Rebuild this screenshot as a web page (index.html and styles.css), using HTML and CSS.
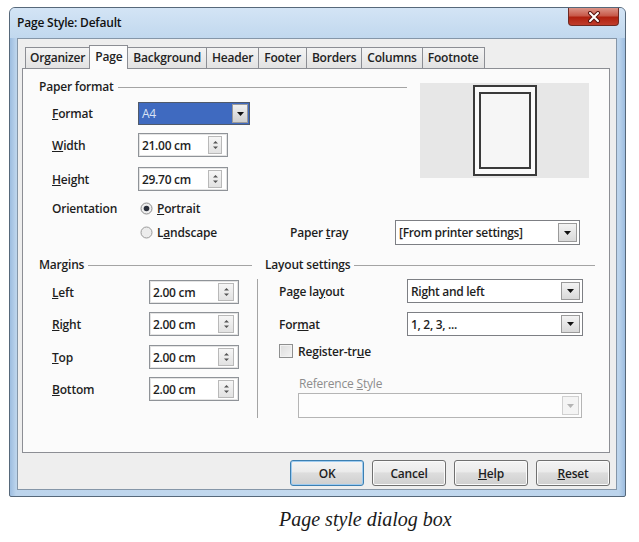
FILE: index.html
```html
<!DOCTYPE html>
<html lang="en">
<head>
<meta charset="utf-8">
<title>Page Style: Default</title>
<link rel="stylesheet" href="styles.css">
</head>
<body>
<div class="window">
  <div class="titlebar">
    <span class="title">Page Style: Default</span>
    <button class="close" type="button" aria-label="Close">
      <svg width="14" height="12" viewBox="0 0 14 12"><path d="M3 2l8 8M11 2l-8 8" stroke="#5a1410" stroke-width="4" stroke-linecap="round"/><path d="M3 2l8 8M11 2l-8 8" stroke="#fff" stroke-width="2" stroke-linecap="round"/></svg>
    </button>
  </div>
  <div class="client">
    <div class="tabs">
      <span class="tab">Organizer</span>
      <span class="tab active">Page</span>
      <span class="tab">Background</span>
      <span class="tab">Header</span>
      <span class="tab">Footer</span>
      <span class="tab">Borders</span>
      <span class="tab">Columns</span>
      <span class="tab">Footnote</span>
    </div>
    <div class="panel">
      <div class="paper">
        <div class="paper-fields">
          <div class="group-head">Paper format</div>
          <div class="row r-format">
            <span class="lbl lbl-paper"><u>F</u>ormat</span>
            <div class="combo combo-a4"><span class="combo-text">A4</span><span class="drop"><svg width="7" height="4" viewBox="0 0 7 4"><path d="M0 0h7L3.5 4z" fill="#111"/></svg></span></div>
          </div>
          <div class="row r-width">
            <span class="lbl lbl-paper"><u>W</u>idth</span>
            <div class="spin"><span class="spin-text">21.00 cm</span><span class="spin-btn"><svg width="7" height="12" viewBox="0 0 7 12"><path d="M1 4.5L3.5 2 6 4.5zM1 7.5L3.5 10 6 7.5z" fill="#555"/></svg></span></div>
          </div>
          <div class="row r-height">
            <span class="lbl lbl-paper"><u>H</u>eight</span>
            <div class="spin"><span class="spin-text">29.70 cm</span><span class="spin-btn"><svg width="7" height="12" viewBox="0 0 7 12"><path d="M1 4.5L3.5 2 6 4.5zM1 7.5L3.5 10 6 7.5z" fill="#555"/></svg></span></div>
          </div>
          <div class="row r-orient">
            <span class="lbl lbl-paper">Orientation</span>
            <span class="radio-opt">
              <svg class="radio" width="13" height="13" viewBox="0 0 13 13"><circle cx="6.5" cy="6.5" r="5.5" fill="#eee" stroke="#8a8a8a"/><circle cx="6.5" cy="6.5" r="2.8" fill="#2a2f3a"/></svg>
              <span><u>P</u>ortrait</span>
            </span>
          </div>
        </div>
        <div class="preview">
          <div class="sheet"><div class="sheet-inner"></div></div>
        </div>
      </div>
      <div class="row r-landscape">
        <span class="lbl lbl-paper"></span>
        <span class="radio-opt radio-land">
          <svg class="radio" width="13" height="13" viewBox="0 0 13 13"><circle cx="6.5" cy="6.5" r="5.5" fill="#ececec" stroke="#9a9a9a"/></svg>
          <span>L<u>a</u>ndscape</span>
        </span>
        <span class="lbl lbl-tray">Paper <u>t</u>ray</span>
        <div class="combo combo-tray"><span class="combo-text">[From printer settings]</span><span class="drop"><svg width="7" height="4" viewBox="0 0 7 4"><path d="M0 0h7L3.5 4z" fill="#111"/></svg></span></div>
      </div>
      <div class="lower">
        <div class="margins">
          <div class="group-head">Margins</div>
          <div class="row m-row m1">
            <span class="lbl lbl-margin"><u>L</u>eft</span>
            <div class="spin"><span class="spin-text">2.00 cm</span><span class="spin-btn"><svg width="7" height="12" viewBox="0 0 7 12"><path d="M1 4.5L3.5 2 6 4.5zM1 7.5L3.5 10 6 7.5z" fill="#555"/></svg></span></div>
          </div>
          <div class="row m-row m2">
            <span class="lbl lbl-margin"><u>R</u>ight</span>
            <div class="spin"><span class="spin-text">2.00 cm</span><span class="spin-btn"><svg width="7" height="12" viewBox="0 0 7 12"><path d="M1 4.5L3.5 2 6 4.5zM1 7.5L3.5 10 6 7.5z" fill="#555"/></svg></span></div>
          </div>
          <div class="row m-row m3">
            <span class="lbl lbl-margin"><u>T</u>op</span>
            <div class="spin"><span class="spin-text">2.00 cm</span><span class="spin-btn"><svg width="7" height="12" viewBox="0 0 7 12"><path d="M1 4.5L3.5 2 6 4.5zM1 7.5L3.5 10 6 7.5z" fill="#555"/></svg></span></div>
          </div>
          <div class="row m-row m4">
            <span class="lbl lbl-margin"><u>B</u>ottom</span>
            <div class="spin"><span class="spin-text">2.00 cm</span><span class="spin-btn"><svg width="7" height="12" viewBox="0 0 7 12"><path d="M1 4.5L3.5 2 6 4.5zM1 7.5L3.5 10 6 7.5z" fill="#555"/></svg></span></div>
          </div>
        </div>
        <div class="layout">
          <div class="group-head">Layout settings</div>
          <div class="layout-body">
            <div class="row l-row l1">
              <span class="lbl lbl-layout">Page la<u>y</u>out</span>
              <div class="combo combo-layout"><span class="combo-text">Right and left</span><span class="drop"><svg width="7" height="4" viewBox="0 0 7 4"><path d="M0 0h7L3.5 4z" fill="#111"/></svg></span></div>
            </div>
            <div class="row l-row l2">
              <span class="lbl lbl-layout">For<u>m</u>at</span>
              <div class="combo combo-layout"><span class="combo-text">1, 2, 3, ...</span><span class="drop"><svg width="7" height="4" viewBox="0 0 7 4"><path d="M0 0h7L3.5 4z" fill="#111"/></svg></span></div>
            </div>
            <div class="row check-row">
              <span class="check"></span>
              <span>Register-tr<u>u</u>e</span>
            </div>
            <div class="row ref-label"><span>Reference <u>S</u>tyle</span></div>
            <div class="combo combo-disabled"><span class="combo-text"></span><span class="drop"><svg width="7" height="4" viewBox="0 0 7 4"><path d="M0 0h7L3.5 4z" fill="#b4b4b4"/></svg></span></div>
          </div>
        </div>
      </div>
    </div>
    <div class="buttons">
      <button class="btn btn-default" type="button">OK</button>
      <button class="btn" type="button">Cancel</button>
      <button class="btn" type="button"><u>H</u>elp</button>
      <button class="btn" type="button"><u>R</u>eset</button>
    </div>
  </div>
</div>
<p class="caption">Page style dialog box</p>
</body>
</html>
```

FILE: styles.css
```css
* { box-sizing: border-box; }

body {
  margin: 0;
  padding: 7px 0 0 9px;
  background: #fff;
  font-family: "Open Sans", "Liberation Sans", sans-serif;
  font-size: 12px;
  color: #1e1e1e;
}

u { text-decoration: underline; text-underline-offset: 1px; }

/* window frame */
.window {
  width: 617px;
  height: 490px;
  border: 1px solid #56687a;
  border-radius: 6px 6px 2px 2px;
  background: linear-gradient(90deg, #9dbde0, #bcd4ec 6px, #c4daef 50%, #bcd4ec calc(100% - 6px), #9dbde0);
  display: flex;
  flex-direction: column;
}

.titlebar {
  height: 30px;
  flex: none;
  display: flex;
  align-items: flex-start;
  padding-left: 7px;
  background: linear-gradient(#d3e4f5, #c1d8ee);
  border-radius: 5px 5px 0 0;
}

.title {
  line-height: 30px;
  color: #111;
  font-weight: 600;
  letter-spacing: -0.2px;
}

.close {
  margin: 0 6px 0 auto;
  width: 51px;
  height: 18px;
  padding: 0;
  border: 1px solid #6e2a22;
  border-top: none;
  border-radius: 0 0 4px 4px;
  background: linear-gradient(#dc9488, #c85a4a 45%, #b0210f 55%, #c03c2c);
  display: flex;
  align-items: center;
  justify-content: center;
}

.client {
  flex: 1;
  margin: 0 8px 6px 7px;
  background: #eeeeee;
  border: 1px solid #8596a8;
  padding: 8px 6px 0 4px;
  display: flex;
  flex-direction: column;
}

/* tab strip */
.tabs {
  display: flex;
  align-items: flex-end;
  height: 21px;
  margin-left: 3px;
}

.tab {
  height: 21px;
  line-height: 19px;
  padding: 0 5px;
  border: 1px solid #8c8e94;
  border-bottom: none;
  margin-left: -1px;
  background: linear-gradient(#f4f4f4, #e2e2e2);
  color: #222;
  font-weight: 600;
  letter-spacing: -0.2px;
}

.tab:first-child { margin-left: 0; padding: 0 4px; }

.tab.active {
  height: 24px;
  line-height: 21px;
  margin-bottom: -1px;
  background: #fcfcfc;
  position: relative;
  z-index: 1;
  padding: 0 5px;
}

.panel {
  height: 385px;
  flex: none;
  border: 1px solid #8c8e94;
  background: #fbfbfb;
  padding: 10px 0 0 16px;
}

/* group headings with a rule after them */
.group-head {
  display: flex;
  align-items: center;
  height: 16px;
  line-height: 16px;
  white-space: nowrap;
  font-weight: 600;
  letter-spacing: -0.2px;
}

.group-head::after {
  content: "";
  flex: 1;
  border-top: 1px solid #a4a4a4;
  margin-left: 4px;
}

.row {
  display: flex;
  align-items: center;
}

.lbl {
  flex: none;
  font-weight: 600;
  letter-spacing: -0.2px;
}

.lbl-paper { width: 86px; }
.lbl-margin { width: 97px; }
.lbl-layout { width: 128px; }
.lbl-tray { width: 105px; }

/* paper format */
.paper { display: flex; }

.paper-fields { width: 368px; }

.paper-fields .row { padding-left: 13px; }

.r-format { margin-top: 7px; height: 23px; }
.r-width { margin-top: 8px; height: 24px; }
.r-height { margin-top: 10px; height: 24px; }
.r-orient { margin-top: 8px; height: 18px; }

.r-landscape {
  margin-top: 3px;
  height: 25px;
  padding-left: 13px;
}

.radio-opt {
  display: flex;
  align-items: center;
  gap: 4px;
  padding-left: 2px;
  font-weight: 600;
  letter-spacing: -0.2px;
}

.radio-land { width: 152px; }

.preview {
  margin: 4px 0 0 13px;
  width: 169px;
  height: 95px;
  background: #e7e7e7;
  display: flex;
  justify-content: center;
  align-items: center;
}

.sheet {
  width: 64px;
  height: 91px;
  border: 2px solid #3a3a3a;
  background: #fafafa;
  padding: 5px 4px;
}

.sheet-inner {
  width: 100%;
  height: 100%;
  border: 2px solid #3a3a3a;
  background: #f6f6f6;
}

/* spin fields */
.spin {
  height: 24px;
  width: 90px;
  border: 1px solid #8f9398;
  background: #fff;
  box-shadow: inset 0 0 0 1px #e4e4e4;
  display: flex;
  align-items: center;
  padding-left: 3px;
}

.spin-text {
  flex: 1;
  font-weight: 600;
  letter-spacing: -0.3px;
}

.spin-btn {
  width: 14px;
  height: 18px;
  margin-right: 5px;
  border: 1px solid #b9b9b9;
  background: linear-gradient(#f6f6f6, #e2e2e2);
  display: flex;
  align-items: center;
  justify-content: center;
}

.margins .spin { width: 90px; }
.margins .spin-btn { width: 16px; margin-right: 4px; }

/* drop-down lists */
.combo {
  height: 25px;
  border: 1px solid #7d7f84;
  background: #fff;
  display: flex;
  align-items: stretch;
}

.combo-text {
  flex: 1;
  padding-left: 3px;
  display: flex;
  align-items: center;
  white-space: nowrap;
  font-weight: 600;
  letter-spacing: -0.3px;
}

.drop {
  width: 19px;
  margin: 2px;
  border: 1px solid #9a9a9a;
  background: linear-gradient(#f3f3f3, #d9d9d9);
  display: flex;
  align-items: center;
  justify-content: center;
}

.combo-a4 {
  width: 112px;
  height: 23px;
  border-color: #505a6a;
  background: #3f6ac0;
}

.combo-a4 .combo-text {
  color: #d9e3f5;
  font-weight: 400;
}

.combo-a4 .drop {
  width: 16px;
  margin: 1px;
  background: linear-gradient(#f0f0f0, #cfcfcf);
}

.combo-tray { width: 185px; }
.combo-layout { width: 176px; height: 24px; }

/* lower half: margins and layout settings */
.lower {
  display: flex;
  margin-top: 12px;
}

.margins { width: 213px; }

.m-row { padding-left: 13px; height: 24px; }
.m1 { margin-top: 7px; }
.m2 { margin-top: 8px; }
.m3 { margin-top: 9px; }
.m4 { margin-top: 8px; }

.layout {
  margin-left: 5px;
  width: 338px;
}

.layout .group-head { padding-left: 8px; }

.layout-body {
  margin-top: 6px;
  height: 139px;
  border-left: 1px solid #a4a4a4;
  padding-left: 21px;
}

.l-row { height: 24px; }
.l2 { margin-top: 9px; }

.check-row {
  margin-top: 7px;
  height: 16px;
  gap: 5px;
  font-weight: 600;
  letter-spacing: -0.2px;
}

.check {
  width: 14px;
  height: 14px;
  border: 1px solid #8e8f8f;
  background: linear-gradient(135deg, #dcdcdc, #f4f4f4);
  box-shadow: inset 0 0 0 1px #f2f2f2;
}

.ref-label {
  margin-top: 16px;
  height: 16px;
  padding-left: 20px;
  color: #8d8d8d;
  letter-spacing: -0.2px;
}

.combo-disabled {
  margin: 2px 0 0 19px;
  width: 284px;
  height: 25px;
  border-color: #b5b5b5;
  background: #fdfdfd;
}

.combo-disabled .drop {
  width: 17px;
  border-color: #d0d0d0;
  background: #f4f4f4;
}

/* command buttons */
.buttons {
  display: flex;
  justify-content: flex-end;
  gap: 8px;
  margin-top: 7px;
}

.btn {
  width: 74px;
  height: 26px;
  padding: 0;
  border: 1px solid #707070;
  border-radius: 3px;
  background: linear-gradient(#f4f4f4, #ebebeb 45%, #dddddd 50%, #cfcfcf);
  box-shadow: inset 0 0 0 1px #fbfbfb;
  font-family: "Open Sans", "Liberation Sans", sans-serif;
  font-size: 12px;
  font-weight: 600;
  color: #1e1e1e;
  letter-spacing: -0.2px;
}

.btn-default {
  border-color: #3c7fb1;
  box-shadow: inset 0 0 0 1px #9ecbf0;
}

.caption {
  margin: 10px 0 0 270px;
  font-family: "Liberation Serif", "DejaVu Serif", serif;
  font-style: italic;
  font-size: 20px;
  line-height: 24px;
  color: #1a1a1a;
}
```
